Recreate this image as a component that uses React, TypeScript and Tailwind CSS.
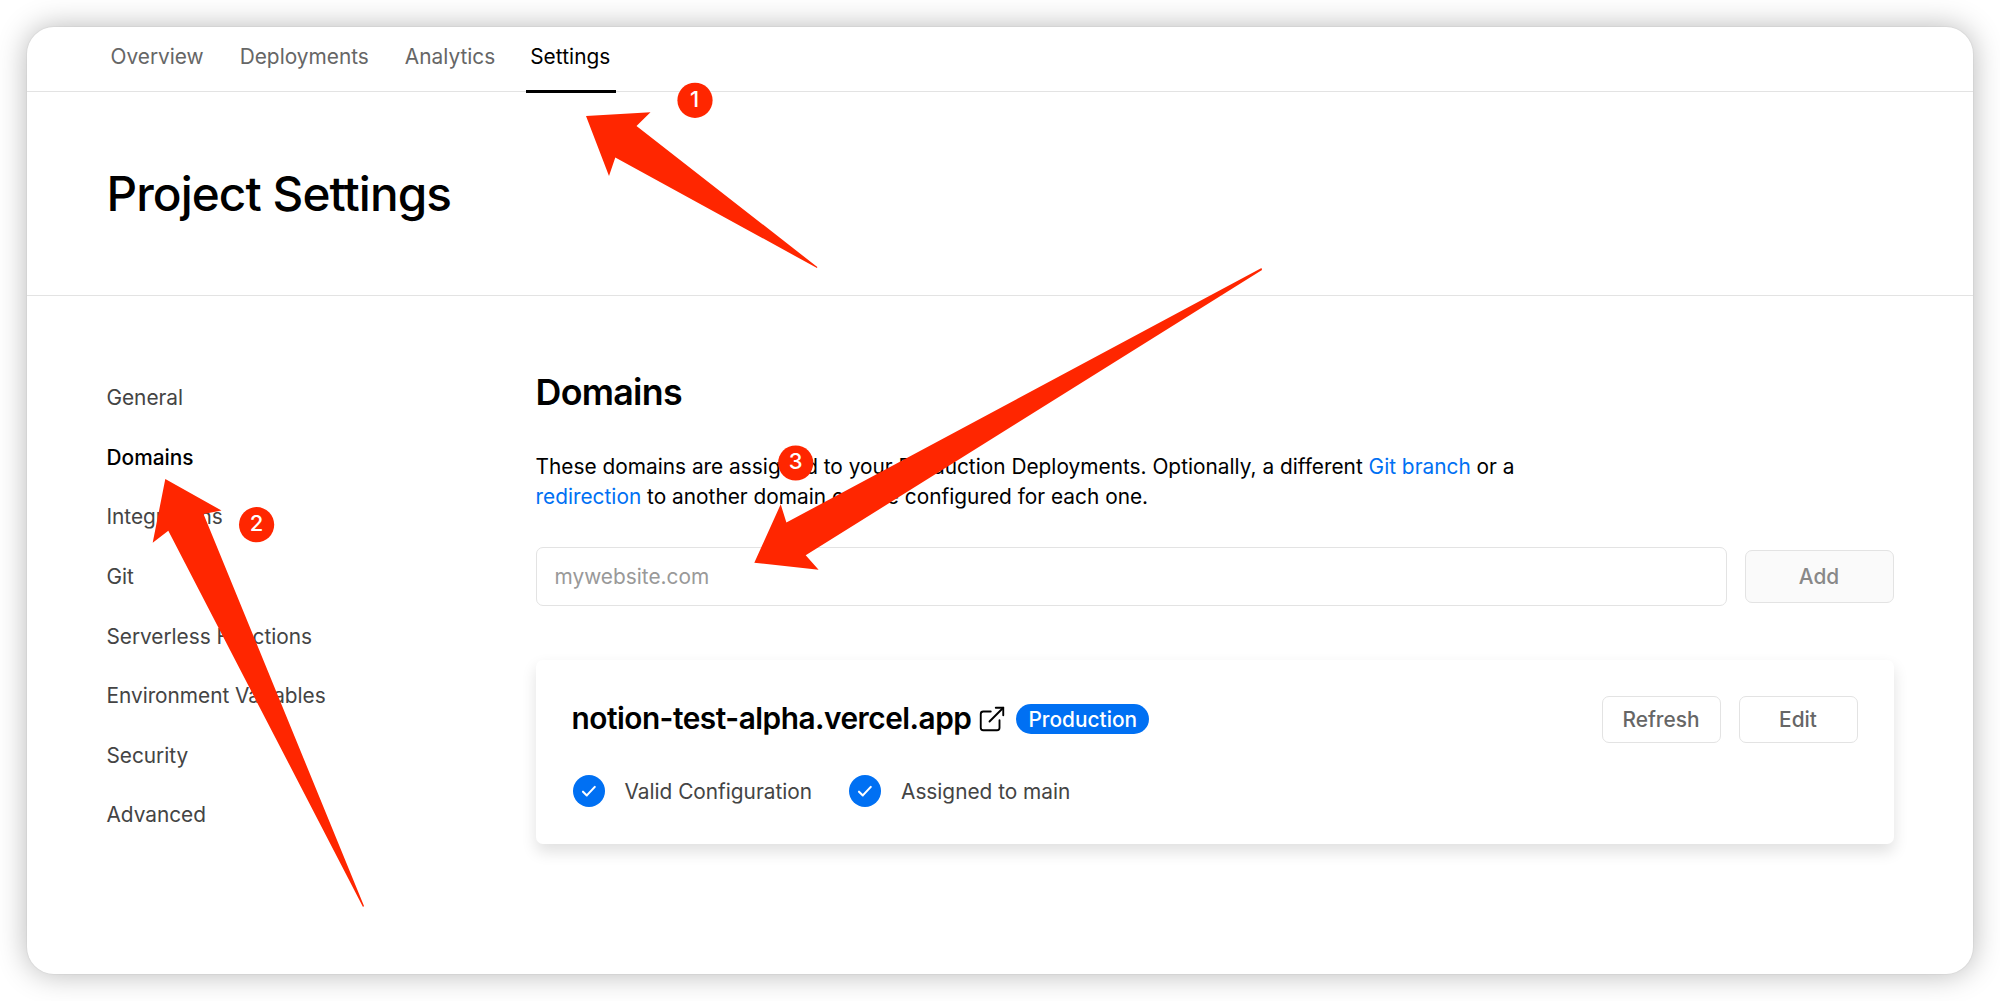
import React from "react";

const tabs = ["Overview", "Deployments", "Analytics", "Settings"];

const sections = [
  "General",
  "Domains",
  "Integrations",
  "Git",
  "Serverless Functions",
  "Environment Variables",
  "Security",
  "Advanced",
];

function ExternalIcon() {
  return (
    <svg className="ml-[6px] h-[30px] w-[30px] shrink-0" viewBox="0 0 24 24" fill="none" stroke="#000" strokeWidth="1.5" strokeLinecap="round" strokeLinejoin="round">
      <path d="M18 13v6a2 2 0 01-2 2H5a2 2 0 01-2-2V8a2 2 0 012-2h6" />
      <path d="M15 3h6v6" />
      <path d="M10 14L21 3" />
    </svg>
  );
}

function CheckStatus({ label }: { label: string }) {
  return (
    <div className="flex items-center">
      <svg className="h-[32px] w-[32px] shrink-0" viewBox="0 0 32 32" fill="none">
        <circle cx="16" cy="16" r="16" fill="#0070f3" />
        <path d="M10 16.7L13.8 20.4L21.8 11.9" stroke="#fff" strokeWidth="2.1" strokeLinecap="round" strokeLinejoin="round" />
      </svg>
      <span className="ml-[20px] whitespace-nowrap pt-px text-[20.85px] leading-[31px] tracking-[-0.02px] text-[#444]">{label}</span>
    </div>
  );
}

function Button({ children }: { children: React.ReactNode }) {
  return (
    <button className="h-[47px] w-[119px] rounded-[7px] border border-[#e3e3e3] bg-white pt-[2px] text-[20.85px] font-medium leading-none text-[#666]">
      {children}
    </button>
  );
}

function Annotations() {
  return (
    <svg className="pointer-events-none absolute left-0 top-0 h-[1001px] w-[2000px]" viewBox="0 0 2000 1001">
      <g fill="#ff2600">
        <path d="M586 116L650.5 112.3L636.5 126L817.3 267L817 268L615.3 157.5L609 176Z" />
        <path d="M165.3 479L221.5 510.5L203.5 514L364 906L363 907L168.3 530.8L152.7 542.7Z" />
        <path d="M754.3 562.7L780.7 504.3L786.4 522.5L1261.5 268L1262 270L805.7 555.3L818.6 569.8Z" />
      </g>
      <g fill="#ff2600">
        <circle cx="695" cy="100.3" r="17.6" />
        <circle cx="256.6" cy="524.7" r="17.6" />
        <circle cx="795.7" cy="463" r="17.6" />
      </g>
      <g className="font-['Inter'] text-[22px] font-medium" fill="#fff" textAnchor="middle">
        <text x="694.5" y="106.5">1</text>
        <text x="256.6" y="531">2</text>
        <text x="795.7" y="469">3</text>
      </g>
    </svg>
  );
}

export default function App() {
  return (
    <div className="relative h-[1001px] w-[2000px] overflow-hidden bg-white p-[27px] font-['Inter',sans-serif] text-black">
      <div className="flex h-[947px] flex-col rounded-[27px] bg-white shadow-[0_0_0_1px_rgba(0,0,0,0.03),0_0_30px_rgba(0,0,0,0.29)]">
        <nav className="flex h-[65px] shrink-0 border-b border-[#e3e3e3] pl-[79px]">
          {tabs.map((tab) => (
            <div
              key={tab}
              className={
                tab === "Settings"
                  ? "ml-[17px] h-[66px] w-[90px] border-b-[3px] border-black px-[4.5px] pt-[15px] text-[20.85px] leading-[30px] tracking-[0.05px]"
                  : "mr-[9px] px-[4.5px] pt-[15px] text-[20.85px] leading-[30px] text-[#666] not-first:ml-[18px]"
              }
            >
              {tab}
            </div>
          ))}
        </nav>

        <header className="flex h-[204px] shrink-0 items-center border-b border-[#e3e3e3] pl-[79.5px]">
          <h1 className="text-[47.7px] font-medium leading-[60px] tracking-[-0.92px]">Project Settings</h1>
        </header>

        <main className="flex pl-[79.5px]">
          <aside className="flex w-[429px] shrink-0 flex-col pt-[72px]">
            {sections.map((name) => (
              <a
                key={name}
                className={
                  name === "Domains"
                    ? "flex h-[59.6px] items-center text-[20.85px] font-medium text-black"
                    : "flex h-[59.6px] items-center text-[20.85px] tracking-[-0.04px] text-[#444]"
                }
              >
                {name}
              </a>
            ))}
          </aside>

          <section className="flex w-[1358px] flex-col pt-[72.5px]">
            <h2 className="text-[35.8px] font-semibold leading-[46px] tracking-[-0.02em]">Domains</h2>
            <p className="mt-[37.5px] text-[20.85px] leading-[29.8px]">
              These domains are assigned to your Production Deployments. Optionally, a different{" "}
              <a className="text-[#0070f3]">Git branch</a> or a
              <br />
              <a className="text-[#0070f3]">redirection</a> to another domain can be configured for each one.
            </p>
            <div className="mt-[35px] flex items-center gap-[18px]">
              <div className="flex h-[59px] w-[1191px] items-center rounded-[7px] border border-[#e3e3e3] pl-[18px] pt-[2px] text-[20.85px] text-[#999]">
                mywebsite.com
              </div>
              <button className="h-[53px] w-[149px] rounded-[7px] border border-[#e3e3e3] bg-[#fafafa] pt-[2px] text-[20.85px] font-medium leading-none text-[#888]">
                Add
              </button>
            </div>

            <article className="mt-[54px] h-[184.5px] rounded-[7px] bg-white px-[36px] pt-[36px] shadow-[0_7.5px_15px_rgba(0,0,0,0.12)]">
              <div className="flex h-[47px] items-center">
                <h3 className="-mt-[2px] text-[29.8px] font-semibold leading-[46px] tracking-[-0.49px]">notion-test-alpha.vercel.app</h3>
                <ExternalIcon />
                <span className="ml-[9px] flex h-[30px] items-center rounded-full bg-[#0070f3] px-[12px] pt-[2px] text-[20.85px] font-medium text-white">
                  Production
                </span>
                <div className="ml-auto flex gap-[18px]">
                  <Button>Refresh</Button>
                  <Button>Edit</Button>
                </div>
              </div>
              <div className="mt-[32px] flex gap-[37px] pl-px">
                <CheckStatus label="Valid Configuration" />
                <CheckStatus label="Assigned to main" />
              </div>
            </article>
          </section>
        </main>
      </div>
      <Annotations />
    </div>
  );
}
